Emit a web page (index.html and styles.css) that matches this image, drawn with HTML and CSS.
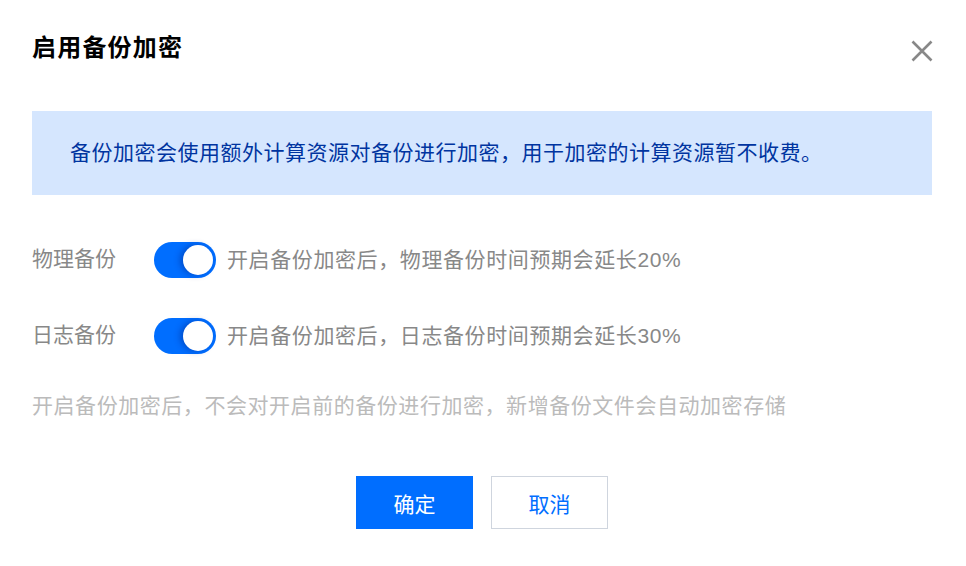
FILE: index.html
```html
<!DOCTYPE html>
<html lang="zh">
<head>
<meta charset="utf-8">
<link rel="stylesheet" href="styles.css">
</head>
<body>
<div class="dialog">
  <div class="header">
    <h1 class="title">启用备份加密</h1>
    <button class="close" aria-label="关闭">
      <svg width="22" height="22" viewBox="0 0 22 22"><path d="M1.5 1.5 L20.5 20.5 M20.5 1.5 L1.5 20.5" stroke="#888" stroke-width="2.6" fill="none"/></svg>
    </button>
  </div>
  <div class="banner">备份加密会使用额外计算资源对备份进行加密，用于加密的计算资源暂不收费。</div>
  <div class="row">
    <span class="label">物理备份</span>
    <span class="switch"><span class="knob"></span></span>
    <span class="desc">开启备份加密后，物理备份时间预期会延长20%</span>
  </div>
  <div class="row row2">
    <span class="label">日志备份</span>
    <span class="switch"><span class="knob"></span></span>
    <span class="desc">开启备份加密后，日志备份时间预期会延长30%</span>
  </div>
  <p class="note">开启备份加密后，不会对开启前的备份进行加密，新增备份文件会自动加密存储</p>
  <div class="footer">
    <button class="btn primary">确定</button>
    <button class="btn">取消</button>
  </div>
</div>
</body>
</html>
```
FILE: styles.css
```css
html, body {
  margin: 0;
  padding: 0;
  background: #fff;
}
body {
  font-family: "Liberation Sans", "Noto Sans CJK SC", sans-serif;
  width: 966px;
  height: 566px;
  overflow: hidden;
}
.dialog {
  padding: 30px 34px 0 32px;
}
.header {
  display: flex;
  justify-content: space-between;
  align-items: center;
  height: 36px;
}
.title {
  margin: 0;
  font-size: 24px;
  line-height: 36px;
  font-weight: 700;
  letter-spacing: 1.2px;
  color: #000;
}
.close {
  border: 0;
  background: none;
  padding: 0;
  width: 22px;
  height: 22px;
  margin-top: 6px;
  margin-right: -1px;
  display: flex;
}
.banner {
  margin-top: 45px;
  height: 84px;
  box-sizing: border-box;
  background: #d5e6fe;
  color: #0034a0;
  font-size: 21px;
  letter-spacing: 0.5px;
  line-height: 84px;
  padding-left: 38px;
}
.row {
  margin-top: 47px;
  display: flex;
  align-items: center;
  height: 36px;
}
.row2 {
  margin-top: 40px;
}
.label {
  width: 122px;
  font-size: 21px;
  color: #888;
  line-height: 30px;
  margin-top: -3px;
}
.switch {
  position: relative;
  width: 62px;
  height: 36px;
  border-radius: 18px;
  background: #006eff;
  flex: none;
}
.knob {
  position: absolute;
  right: 3px;
  top: 3px;
  width: 30px;
  height: 30px;
  border-radius: 50%;
  background: #fff;
  box-shadow: -3px 0 6px rgba(0, 40, 140, 0.45);
}
.desc {
  margin-left: 11px;
  font-size: 21px;
  letter-spacing: 0.6px;
  color: #888;
  line-height: 30px;
}
.note {
  margin: 37px 0 0;
  font-size: 21px;
  letter-spacing: 0.55px;
  line-height: 30px;
  color: #bbb;
}
.footer {
  margin-top: 55px;
  display: flex;
  justify-content: center;
  gap: 18px;
}
.btn {
  width: 117px;
  height: 53px;
  box-sizing: border-box;
  border: 1px solid #cfd5de;
  background: #fff;
  color: #006eff;
  font-family: inherit;
  font-size: 21px;
  padding: 0;
}
.btn.primary {
  background: #006eff;
  border-color: #006eff;
  color: #fff;
}
```
